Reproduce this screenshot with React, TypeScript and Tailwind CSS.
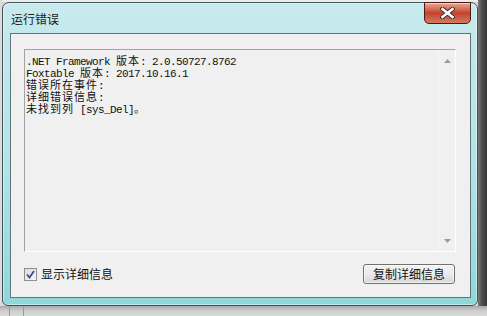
import React from "react"

const cjk = { fontFamily: '"Noto Sans CJK SC", "Noto Sans", sans-serif' }
const mono = { fontFamily: '"Liberation Mono", "DejaVu Sans Mono", monospace' }

// one run of half-width text, 6px per char like SimSun
function A({ children }: { children: React.ReactNode }) {
  return (
    <span className="inline-block h-[12px] leading-[12px] text-[11px] tracking-[-0.6px] whitespace-pre" style={mono}>
      {children}
    </span>
  )
}

// full-width run, 12px per char
function C({ children }: { children: React.ReactNode }) {
  return (
    <span className="inline-block h-[12px] leading-[12px] text-[11px] tracking-[1px] whitespace-pre" style={cjk}>
      {children}
    </span>
  )
}

function CloseButton() {
  return (
    <div className="absolute right-[6px] top-[-1px] h-[22px] w-[47px] rounded-b-[5px] border border-[#4e1a10] bg-gradient-to-b from-[#e7a898] via-[#c4412a] to-[#d27a62] flex items-center justify-center shadow-[inset_0_1px_0_rgba(255,255,255,0.5)]">
      <svg width="15" height="12" viewBox="0 0 15 12">
        <path
          d="M2.5 2 L12.5 10 M12.5 2 L2.5 10"
          stroke="#3a2a2a"
          strokeWidth="4.4"
          strokeLinecap="square"
        />
        <path
          d="M2.5 2 L12.5 10 M12.5 2 L2.5 10"
          stroke="#ffffff"
          strokeWidth="2.6"
          strokeLinecap="square"
        />
      </svg>
    </div>
  )
}

function Arrow({ up }: { up?: boolean }) {
  return (
    <svg width="7" height="4" viewBox="0 0 7 4">
      <path d={up ? "M3.5 0 L7 4 L0 4 Z" : "M0 0 L7 0 L3.5 4 Z"} fill="#9c9c9c" />
    </svg>
  )
}

export default function App() {
  return (
    <div className="w-[487px] h-[316px] overflow-hidden flex flex-col bg-[#d6d6d6]">
      <div className="flex">
        <div className="w-[2px] bg-[#dcdcdc]" />
        <div className="flex flex-col">
          <div className="h-[2px] bg-[#ececec]" />

          {/* Window */}
          <div className="relative w-[476px] h-[304px] rounded-t-[7px] rounded-b-[6px] border border-[#3f5358] bg-gradient-to-b from-[#c8eaee] via-[#b3e4e8] to-[#8fd7da] flex flex-col shadow-[inset_0_0_0_1px_rgba(255,255,255,0.45)]">
            <div className="h-[30px] pl-[8px] flex items-center">
              <span className="text-[12px] leading-[14px] text-[#1b1b1b] mt-[1px]" style={cjk}>
                运行错误
              </span>
            </div>
            <CloseButton />

            {/* Client area */}
            <div className="ml-[7px] mr-[6px] h-[265px] border border-[#5f777c] bg-[#f0f0f0] flex flex-col pt-[15px] pl-[13px]">
              <div className="mr-[14px] h-[203px] border-t border-l border-t-[#a3a3a3] border-l-[#a3a3a3] border-b border-r border-b-white border-r-white flex">
                <div className="flex-1 pt-[3px] pl-[1px] leading-[12px] text-[#111]">
                  <div className="h-[12px]">
                    <A>.NET Framework </A>
                    <C>版本</C>
                    <A>: 2.0.50727.8762</A>
                  </div>
                  <div className="h-[12px]">
                    <A>Foxtable </A>
                    <C>版本</C>
                    <A>: 2017.10.16.1</A>
                  </div>
                  <div className="h-[12px]">
                    <C>错误所在事件</C>
                    <A>:</A>
                  </div>
                  <div className="h-[12px]">
                    <C>详细错误信息</C>
                    <A>:</A>
                  </div>
                  <div className="h-[12px]">
                    <C>未找到列</C>
                    <A> [sys_Del]</A>
                    <C>。</C>
                  </div>
                </div>
                <div className="w-[17px] border-l border-[#f8f8f8] flex flex-col justify-between items-center py-[7px]">
                  <div className="pt-[2px]">
                    <Arrow up />
                  </div>
                  <div className="pb-[1px]">
                    <Arrow />
                  </div>
                </div>
              </div>

              <div className="mt-[12px] pr-[15px] h-[20px] flex items-center justify-between">
                <div className="flex items-center gap-[4px]">
                  <div className="w-[13px] h-[13px] border border-[#8e8f8f] bg-gradient-to-br from-[#dcdcdc] to-[#f6f6f6] flex items-center justify-center">
                    <svg width="9" height="9" viewBox="0 0 9 9">
                      <path
                        d="M1 4.5 L3.5 7.5 L8 1"
                        fill="none"
                        stroke="#3a4a9a"
                        strokeWidth="1.8"
                      />
                    </svg>
                  </div>
                  <span className="text-[12px] text-[#111] leading-[14px]" style={cjk}>
                    显示详细信息
                  </span>
                </div>
                <button className="w-[92px] h-[20px] rounded-[3px] border border-[#707070] bg-gradient-to-b from-[#f2f2f2] via-[#ebebeb] to-[#d6d6d6] text-[12px] text-[#111] leading-[14px] flex items-center justify-center shadow-[inset_0_0_0_1px_rgba(255,255,255,0.7)]" style={cjk}>
                  复制详细信息
                </button>
              </div>
            </div>
          </div>
        </div>
        <div className="w-[9px] bg-gradient-to-r from-[#7a7a7a] via-[#4a4a4a] to-[#3a3a3a]" />
      </div>
      <div className="flex-1 bg-gradient-to-b from-[#a9a9a9] via-[#cfcfcf] to-[#dadada] flex">
        <div className="w-[10px] border-r border-[#9a9a9a]" />
        <div className="w-[14px] border-r border-[#9a9a9a]" />
      </div>
    </div>
  )
}
